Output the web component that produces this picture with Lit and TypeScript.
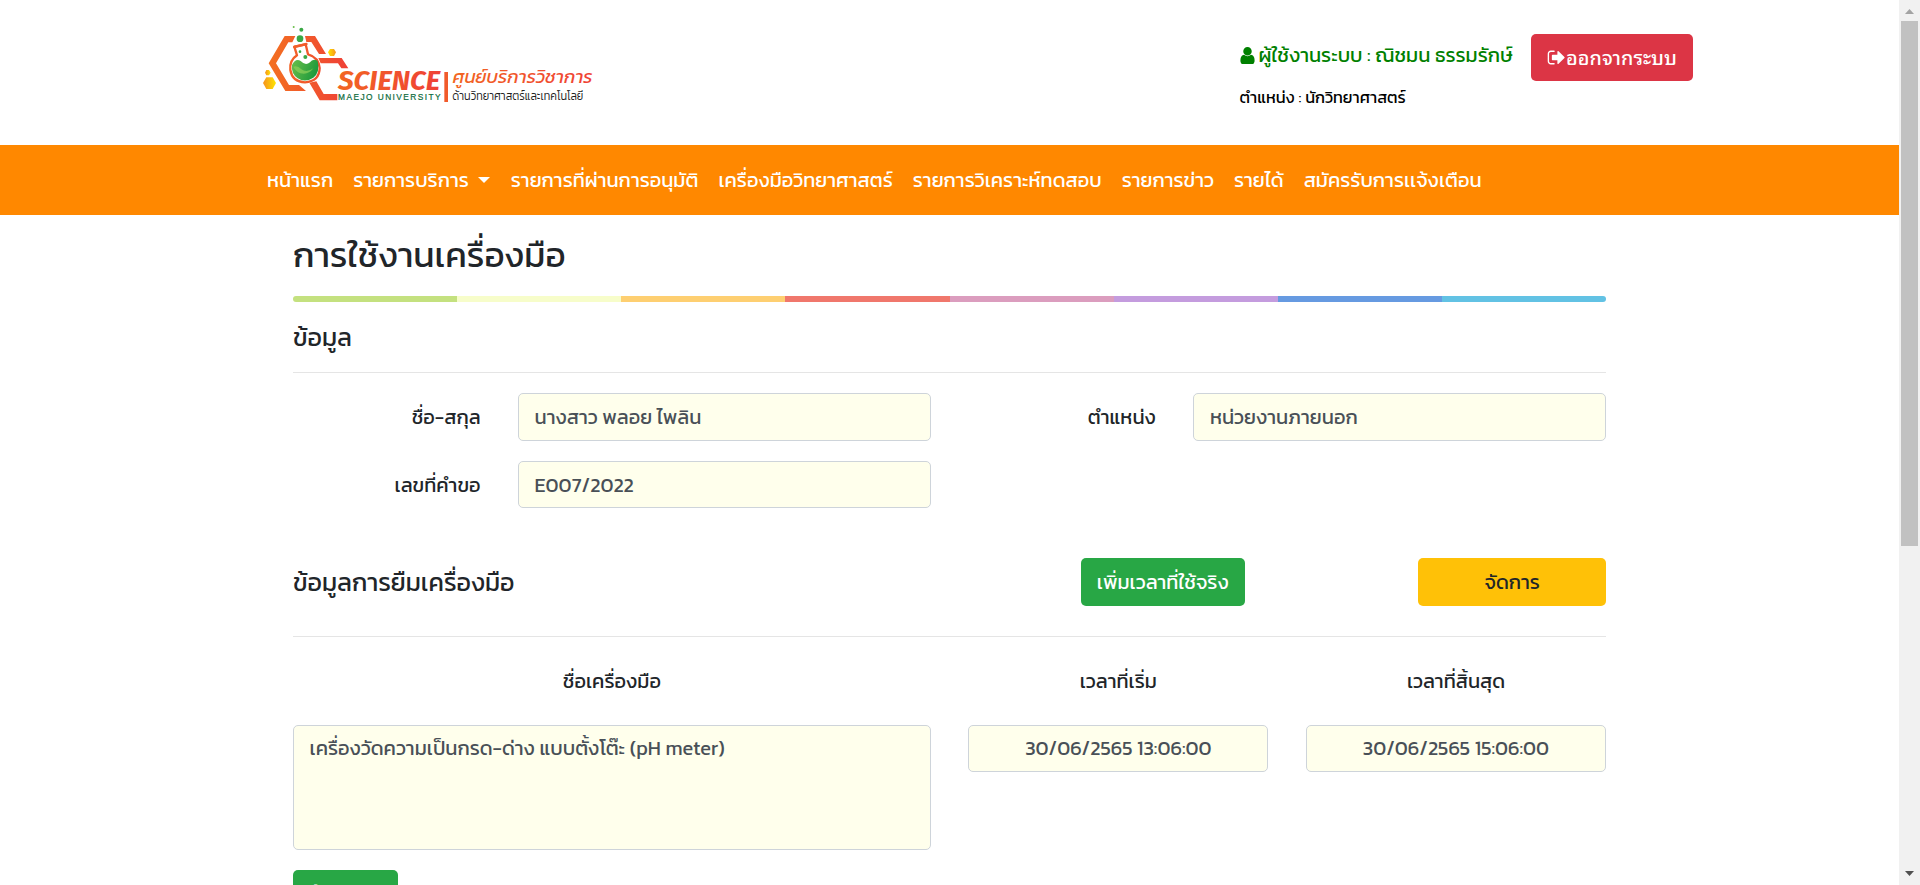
import { LitElement, html, css } from "lit";
import { customElement } from "lit/decorators.js";

const STRIPES = ["#c4e17f", "#f7fdca", "#fecf71", "#f0776c", "#db9dbe", "#c49cde", "#669ae1", "#62c2e4"];

const NAV: { label: string; menu?: boolean }[] = [
  { label: "หน้าแรก" },
  { label: "รายการบริการ", menu: true },
  { label: "รายการที่ผ่านการอนุมัติ" },
  { label: "เครื่องมือวิทยาศาสตร์" },
  { label: "รายการวิเคราะห์ทดสอบ" },
  { label: "รายการข่าว" },
  { label: "รายได้" },
  { label: "สมัครรับการเเจ้งเตือน" },
];

@customElement("center-logo")
export class CenterLogo extends LitElement {
  static styles = css`
    :host { display: block; width: 360px; height: 110px; }
    svg { display: block; width: 360px; height: 110px; }
    .science { font: italic 700 79px "Fira Sans", "Open Sans", sans-serif; }
    .maejo { font: 500 25px "Liberation Sans", sans-serif; fill: #0b6b3b; stroke: #0b6b3b; stroke-width: 0.6; }
    .name { font: italic 400 52px "Kanit", "Noto Sans Thai", sans-serif; }
    .field { font: 300 35px "Kanit", "Noto Sans Thai", sans-serif; fill: #222; }
  `;
  render() {
    return html`<svg viewBox="0 0 1080 330">
      <defs>
        <linearGradient id="o" gradientUnits="userSpaceOnUse" x1="57" y1="0" x2="290" y2="0">
          <stop offset="0" stop-color="#f37021" /><stop offset="1" stop-color="#ef4136" />
        </linearGradient>
        <linearGradient id="s" gradientUnits="userSpaceOnUse" x1="265" y1="0" x2="570" y2="0">
          <stop offset="0" stop-color="#f26522" /><stop offset="1" stop-color="#ef4136" />
        </linearGradient>
        <linearGradient id="n" gradientUnits="userSpaceOnUse" x1="610" y1="0" x2="1030" y2="0">
          <stop offset="0" stop-color="#f26522" /><stop offset="1" stop-color="#ef4136" />
        </linearGradient>
        <linearGradient id="y" x1="0" y1="0" x2="1" y2="0">
          <stop offset="0" stop-color="#f6921e" /><stop offset="1" stop-color="#ffe600" />
        </linearGradient>
        <linearGradient id="y2" x1="0" y1="0" x2="1" y2="0">
          <stop offset="0" stop-color="#ffe600" /><stop offset="1" stop-color="#f6921e" />
        </linearGradient>
        <linearGradient id="g" x1="0" y1="0" x2="1" y2="0.3">
          <stop offset="0" stop-color="#6abf4b" /><stop offset="1" stop-color="#1f9a3c" />
        </linearGradient>
      </defs>
      <path fill="url(#o)" d="M104 78H136L127 97H115L78 160L117 225H147L168 243H106L56 160Z" />
      <path fill="url(#o)" d="M165 78H195L228 132H207L184 96H169Z" />
      <path fill="url(#o)" d="M205 144H275L295 175H274L264 160H212Z" />
      <path fill="url(#o)" d="M178 218L199 214L221 252H262V271H209Z" />
      <path fill="#fff" stroke="url(#o)" stroke-width="7" stroke-linejoin="round"
        d="M133 110L141 136Q118 151 121 180Q127 216 165 217Q208 214 209 174Q206 142 174 133L167 103Z" />
      <path fill="none" stroke="url(#o)" stroke-width="8" stroke-linecap="round" d="M133 111L169 102" />
      <path fill="url(#g)" d="M126 165Q137 143 152 153Q166 168 180 157Q188 144 203 152Q211 187 190 203Q166 219 143 205Q123 191 126 165Z" />
      <path fill="#8ed05a" opacity=".7" d="M130 170Q143 165 154 178Q170 190 190 175Q175 196 151 190Q137 184 130 170Z" />
      <circle cx="150" cy="125" r="4" fill="#39a845" /><circle cx="166" cy="141" r="6" fill="#39a845" />
      <circle cx="150" cy="86" r="10" fill="#39a845" /><circle cx="154" cy="59" r="6" fill="#39a845" />
      <circle cx="131" cy="51" r="3" fill="#6abf4b" />
      <path fill="url(#y2)" d="M240 117H252L258 127L252 138H240L234 127Z" />
      <path fill="url(#y)" d="M49 180H57L62 188L57 196H49L45 188Z" />
      <path fill="url(#y)" d="M49 202H68L78 219L68 237H49L39 219Z" />
      <text class="science" x="264" y="239" textLength="306" lengthAdjust="spacingAndGlyphs" fill="url(#s)">SCIENCE</text>
      <text class="maejo" x="264" y="270" textLength="308" lengthAdjust="spacing">MAEJO UNIVERSITY</text>
      <rect x="583" y="186" width="11" height="90" fill="#f15a2b" />
      <text class="name" x="608" y="219" textLength="420" lengthAdjust="spacingAndGlyphs" fill="url(#n)">ศูนย์บริการวิชาการ</text>
      <text class="field" x="607" y="270" textLength="393" lengthAdjust="spacingAndGlyphs">ด้านวิทยาศาสตร์และเทคโนโลยี</text>
    </svg>`;
  }
}

@customElement("app-root")
export class AppRoot extends LitElement {
  static styles = css`
    :host { display: block; font: 400 20px/30px "Kanit", "Noto Sans Thai", "Noto Sans", sans-serif; color: #212529; }
    * { box-sizing: border-box; }
    .window { display: flex; width: 100%; height: 885px; overflow: hidden; background: #fff; }
    .page { flex: 1; min-width: 0; }
    .header { height: 145px; padding: 10px 206px 0 250px; display: flex; align-items: flex-start; }
    .account { margin-left: auto; width: 291.5px; padding-top: 30px; color: #000; }
    .who { display: flex; align-items: center; gap: 4px; height: 30px; color: green; white-space: nowrap; }
    .who svg { width: 15px; height: 17px; fill: green; }
    .role { margin-top: 12px; font-size: 16.25px; line-height: 30px; }
    .btn { display: flex; align-items: center; justify-content: center; height: 48px; border-radius: 5px; border: 0; padding: 0 16px; color: #fff; font: inherit; white-space: nowrap; }
    .logout { margin-top: 24px; width: 162px; height: 47px; padding: 0 16px 1px; background: #dc3545; font-family: "Noto Sans Thai Looped", "Loma", "Liberation Sans", sans-serif; font-size: 19.8px; font-weight: 500; }
    .logout svg { flex: none; width: 18px; height: 15px; fill: #fff; margin-right: 1px; }
    .logout span { line-height: 28px; padding-bottom: 2px; }
    .nav { height: 70px; background: #ff8800; display: flex; align-items: center; gap: 20px; padding-left: 267px; color: #fff; white-space: nowrap; }
    .item { display: flex; align-items: center; }
    .caret { margin: 0 1px 0 9px; border: 6px solid transparent; border-top-color: #fff; border-bottom: 0; }
    .content { width: 1313px; margin-left: 293px; }
    .title { margin: 0; height: 81px; padding-top: 16px; font-size: 35px; line-height: 48px; font-weight: 400; }
    .stripes { display: flex; height: 6px; border-radius: 3px; overflow: hidden; }
    .stripe { flex: 1; }
    .section { margin: 0; font-size: 25px; line-height: 30px; font-weight: 400; }
    .section.first { height: 70px; padding-top: 20px; }
    .rule { height: 1px; background: rgba(0, 0, 0, 0.1); }
    .grid { display: grid; grid-template-columns: repeat(12, 75px); column-gap: 37.55px; }
    .fields { margin-top: 20px; row-gap: 20px; }
    .label { grid-column: span 2; text-align: right; line-height: 49px; height: 47px; }
    .wide { grid-column: span 4; }
    .box { height: 48px; border: 1px solid #ced4da; border-radius: 5px; background: #ffffec; color: #495057; padding: 0 15.5px; line-height: 45px; white-space: nowrap; }
    .fields .box { line-height: 47px; }
    .box.short { height: 47px; }
    .box.center { text-align: center; }
    .box.area { height: 125px; }
    .loan { margin-top: 50px; height: 78px; }
    .loan .section { grid-column: span 7; line-height: 48px; }
    .add { grid-column: span 3; justify-self: start; background: #28a745; }
    .manage { grid-column: span 2; background: #ffc107; color: #212529; }
    .heads { height: 88px; line-height: 30px; padding-top: 29px; text-align: center; }
    .six { grid-column: span 6; }
    .three { grid-column: span 3; }
    .below { margin-top: 20px; width: 105px; background: #28a745; align-items: flex-start; padding-top: 8px; }
    .scroll { width: 21px; background: #f1f1f1; display: flex; flex-direction: column; align-items: center; }
    .scroll svg { width: 21px; height: 21px; display: block; }
    .thumb { width: 17px; height: 525px; background: #c1c1c1; }
    .scroll .down { margin-top: auto; }
  `;

  render() {
    return html`
      <div class="window">
        <div class="page">
          <header class="header">
            <center-logo></center-logo>
            <div class="account">
              <div class="who">
                <svg viewBox="0 0 1280 1536"><path d="M1280 1271q0 109-62.500 187t-150.500 78h-854q-88 0-150.500-78t-62.500-187q0-85 8.500-160.500t31.500-152 58.500-131 94-89 134.500-34.500q131 128 313 128t313-128q76 0 134.500 34.500t94 89 58.500 131 31.500 152 8.500 160.500zm-256-887q0 159-112.500 271.500t-271.500 112.500-271.500-112.500-112.500-271.500 112.500-271.500 271.500-112.500 271.500 112.500 112.500 271.500z" /></svg>
                <span>ผู้ใช้งานระบบ : ณิชมน ธรรมรักษ์</span>
              </div>
              <div class="role">ตำแหน่ง : นักวิทยาศาสตร์</div>
            </div>
            <button class="btn logout">
              <svg viewBox="0 256 1664 1280"><path d="M704 1440q0 4 1 20t.5 26.500-3 23.500-10 19.500-20.500 6.500h-320q-119 0-203.500-84.500t-84.500-203.500v-704q0-119 84.500-203.500t203.500-84.500h320q13 0 22.500 9.500t9.500 22.500q0 4 1 20t.5 26.500-3 23.500-10 19.500-20.500 6.500h-320q-66 0-113 47t-47 113v704q0 66 47 113t113 47h312l11.500 1 11.500 3 8 5.500 7 9 2 13.500zm928-544q0 26-19 45l-544 544q-19 19-45 19t-45-19-19-45v-288h-448q-26 0-45-19t-19-45v-384q0-26 19-45t45-19h448v-288q0-26 19-45t45-19 45 19l544 544q19 19 19 45z" /></svg>
              <span>ออกจากระบบ</span>
            </button>
          </header>
          <nav class="nav">
            ${NAV.map((n) => html`<span class="item">${n.label}${n.menu ? html`<i class="caret"></i>` : ""}</span>`)}
          </nav>
          <main class="content">
            <h1 class="title">การใช้งานเครื่องมือ</h1>
            <div class="stripes">${STRIPES.map((c) => html`<div class="stripe" style="background:${c}"></div>`)}</div>
            <h2 class="section first">ข้อมูล</h2>
            <div class="rule"></div>
            <div class="grid fields">
              <div class="label">ชื่อ-สกุล</div>
              <div class="box wide">นางสาว พลอย ไพลิน</div>
              <div class="label">ตำแหน่ง</div>
              <div class="box wide">หน่วยงานภายนอก</div>
              <div class="label">เลขที่คำขอ</div>
              <div class="box short wide">E007/2022</div>
            </div>
            <div class="grid loan">
              <h2 class="section">ข้อมูลการยืมเครื่องมือ</h2>
              <button class="btn add">เพิ่มเวลาที่ใช้จริง</button>
              <button class="btn manage">จัดการ</button>
            </div>
            <div class="rule"></div>
            <div class="grid heads">
              <div class="six">ชื่อเครื่องมือ</div>
              <div class="three">เวลาที่เริ่ม</div>
              <div class="three">เวลาที่สิ้นสุด</div>
            </div>
            <div class="grid">
              <div class="box area six">เครื่องวัดความเป็นกรด-ด่าง แบบตั้งโต๊ะ (pH meter)</div>
              <div class="box short center three">30/06/2565 13:06:00</div>
              <div class="box short center three">30/06/2565 15:06:00</div>
            </div>
            <button class="btn below">ย้อนกลับ</button>
          </main>
        </div>
        <div class="scroll">
          <svg viewBox="0 0 21 21"><path fill="#a3a3a3" d="M6 14L10.500 9L15 14Z" /></svg>
          <div class="thumb"></div>
          <svg class="down" viewBox="0 0 21 21"><path fill="#505050" d="M6 7L10.500 12L15 7Z" /></svg>
        </div>
      </div>
    `;
  }
}
